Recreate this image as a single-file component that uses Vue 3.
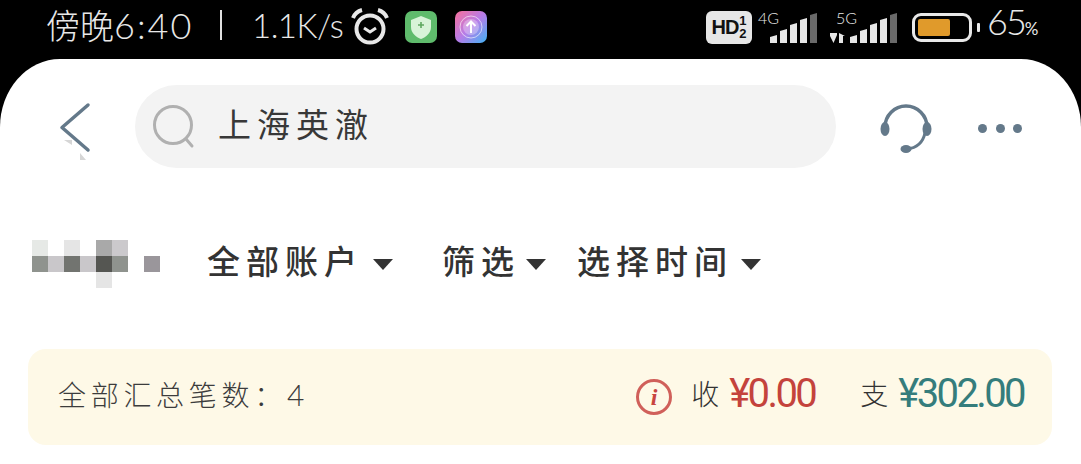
<script setup>
// mosaic cells of the blurred account name, row by row
const mosaic = [
  '#e6e9e6', '', '#e5e5e5', '', '#a9a9a9', '#cbc9cc', '', '',
  '#8f938e', '#c9c7ca', '#727470', '#c9c7ca', '#555652', '#8f938e', '', '#9a969b',
  '', '', '', '', '#e5e5e5', '', '', ''
]
const filters = [
  { label: '筛选', cls: 'f-shai' },
  { label: '选择时间', cls: 'f-time' }
]

// signal bars: slanted top, bottom at y=30
const tops = [22, 16, 10, 5, 0]
function bars(offset) {
  return tops.map((t, i) => {
    const x = offset + i * 10
    return { d: `M${x} 30V${t + 2}L${x + 7} ${t}V30Z`, fill: i === 4 ? '#6a6a6a' : '#e6e6e6' }
  })
}
const bars4g = bars(0)
const bars5g = bars(20)
</script>

<template>
  <div class="page">
    <div class="status">
      <div class="st-left">
        <span class="time"><span class="cjk">傍晚</span>6:40</span>
        <span class="sep"></span>
        <span class="speed">1.1K/s</span>
        <svg class="alarm" width="40" height="40" viewBox="0 0 40 40">
          <circle cx="20" cy="22" r="13.5" fill="none" stroke="#e8e8e8" stroke-width="4" />
          <path d="M14 21l6 4 6-4" fill="none" stroke="#e8e8e8" stroke-width="3" />
          <path d="M3 11C5 6 8 4 12 3M37 11C35 6 32 4 28 3" fill="none" stroke="#e8e8e8" stroke-width="4" />
        </svg>
        <svg class="app-a" width="32" height="32" viewBox="0 0 32 32">
          <rect width="32" height="32" rx="7" fill="#5fbb6c" />
          <path d="M16 5l10 4v7c0 6-5 10-10 12-5-2-10-6-10-12V9z" fill="#d8f3d8" />
          <path d="M16 11v6M13 14h6" stroke="#5fa860" stroke-width="1.6" />
        </svg>
        <svg class="app-b" width="32" height="32" viewBox="0 0 32 32">
          <defs>
            <linearGradient id="upGrad" x1="0" y1="0" x2="1" y2="1">
              <stop offset="0" stop-color="#f7709a" />
              <stop offset="0.5" stop-color="#b77ce8" />
              <stop offset="1" stop-color="#3fb4f5" />
            </linearGradient>
          </defs>
          <rect width="32" height="32" rx="7" fill="url(#upGrad)" />
          <circle cx="16" cy="16" r="11" fill="none" stroke="#fff" stroke-opacity=".6" />
          <circle cx="16" cy="16" r="8" fill="#fff" fill-opacity=".3" />
          <path d="M16 22v-11M11.500 15l4.500-4.500 4.500 4.500" fill="none" stroke="#fff" stroke-width="2" />
        </svg>
      </div>
      <div class="st-right">
        <div class="hd">
          <span class="hd-main">HD</span>
          <span class="hd-frac"><span>1</span><span>2</span></span>
        </div>
        <div class="net net-4g">
          <span class="net-label">4G</span>
          <svg width="47" height="30" viewBox="0 0 47 30">
            <path v-for="b in bars4g" :key="b.d" :d="b.d" :fill="b.fill" stroke-linejoin="round" />
          </svg>
        </div>
        <div class="net net-5g">
          <span class="net-label">5G</span>
          <svg width="67" height="30" viewBox="0 0 67 30">
            <path d="M0 20h7v2l-3.500 8L0 23zM9 20l6 3h-2v7H9z" fill="#e6e6e6" />
            <path v-for="b in bars5g" :key="b.d" :d="b.d" :fill="b.fill" />
          </svg>
        </div>
        <div class="battery">
          <div class="bat-body"><div class="bat-fill"></div></div>
          <div class="bat-tip"></div>
        </div>
        <span class="pct">65<small>%</small></span>
      </div>
    </div>

    <div class="sheet">
      <div class="topbar">
        <svg class="back" width="34" height="62" viewBox="0 0 34 62">
          <path d="M29 5L3 27.500l26 22.500" fill="none" stroke="#64798a" stroke-width="3.500" stroke-linecap="round" stroke-linejoin="round" />
          <path d="M5 40h8v5zM21 53l6 7h-6z" fill="#d6d6d6" />
        </svg>
        <div class="search">
          <svg width="46" height="46" viewBox="0 0 46 46">
            <circle cx="21" cy="21" r="18.500" fill="none" stroke="#b0b0b0" stroke-width="3" />
            <path d="M34 35l6 7" stroke="#b0b0b0" stroke-width="3" stroke-linecap="round" />
          </svg>
          <span class="query">上海英澈</span>
        </div>
        <svg class="headset" width="54" height="54" viewBox="0 0 54 54">
          <path d="M6 24A21 21 0 0 1 48 24" fill="none" stroke="#64798a" stroke-width="3.500" />
          <path d="M46 30C44 39 38 45 28 46" fill="none" stroke="#64798a" stroke-width="3" />
          <ellipse cx="6" cy="26" rx="4.500" ry="7" fill="#64798a" />
          <ellipse cx="48" cy="26" rx="4.500" ry="7" fill="#64798a" />
          <ellipse cx="27" cy="46" rx="5.500" ry="4" fill="#64798a" />
        </svg>
        <div class="more"><i></i><i></i><i></i></div>
      </div>

      <div class="filters">
        <div class="mosaic">
          <span v-for="(c, i) in mosaic" :key="i" :style="{ background: c }"></span>
        </div>
        <div class="filter f-all">全部账户<b class="caret"></b></div>
        <div v-for="f in filters" :key="f.label" class="filter" :class="f.cls">{{ f.label }}<b class="caret"></b></div>
      </div>

      <div class="summary">
        <span class="count">全部汇总笔数：<em>4</em></span>
        <div class="totals">
          <span class="info">i</span>
          <span class="t-label">收</span>
          <span class="amount in">¥0.00</span>
          <span class="t-label t-out">支</span>
          <span class="amount out">¥302.00</span>
        </div>
      </div>
    </div>
  </div>
</template>

<style>
html, body { margin: 0; background: #000; }
</style>

<style scoped>
.page {
  width: 1081px;
  height: 464px;
  overflow: hidden;
  background: #000;
  font-family: "Noto Sans CJK SC", "Noto Sans", sans-serif;
}
.status {
  height: 59px;
  display: flex;
  justify-content: space-between;
  align-items: center;
  color: #e8e8e8;
  padding: 0 44px 5px 46px;
  box-sizing: border-box;
}
.st-left, .st-right { display: flex; align-items: center; }
.time, .speed, .pct { font-family: Lato, sans-serif; font-weight: 300; font-size: 36px; line-height: 40px; margin-bottom: 5px; }
.time { width: 144px; flex: none; white-space: nowrap; letter-spacing: 2px; }
.cjk { font-family: "Noto Sans CJK SC", sans-serif; font-weight: 300; font-size: 34px; letter-spacing: 0; }
.sep { width: 2px; height: 30px; background: #e0e0e0; margin: 0 30px 5px 30px; flex: none; }
.speed { width: 98px; flex: none; font-size: 33px; white-space: nowrap; letter-spacing: -0.500px; }
.app-a { margin-left: 15px; }
.app-b { margin-left: 18px; }
.hd {
  width: 46px;
  height: 33px;
  background: #e6e6e6;
  border-radius: 6px;
  display: flex;
  align-items: center;
  justify-content: center;
  color: #111;
  font-family: "Liberation Sans", sans-serif;
  font-weight: 700;
}
.hd-main { font-size: 20px; letter-spacing: -1px; }
.hd-frac { display: flex; flex-direction: column; font-size: 13px; line-height: 13px; margin-left: 1px; }
.net { position: relative; display: flex; height: 30px; margin-top: 2px; }
.net-4g { margin-left: 18px; }
.net-5g { margin-left: 13px; }
.net-label { position: absolute; top: -3px; font-family: Lato, sans-serif; font-size: 16px; font-weight: 300; line-height: 16px; }
.net-4g .net-label { left: -12px; }
.net-5g .net-label { left: 6px; }
.battery { display: flex; align-items: center; margin-left: 15px; }
.bat-body {
  width: 60px;
  height: 29px;
  box-sizing: border-box;
  border: 3px solid #e8e8e8;
  border-radius: 9px;
  padding: 3px;
}
.bat-fill { width: 32px; height: 100%; background: #e09a2b; border-radius: 2px; }
.bat-tip { width: 3px; height: 9px; background: #e8e8e8; margin-left: 5px; border-radius: 1px; }
.pct { width: 50px; flex: none; margin-left: 7px; white-space: nowrap; letter-spacing: -2px; }
.pct small { font-size: 17px; font-weight: 400; letter-spacing: 0; margin-left: 0; }

.sheet {
  height: 405px;
  background: #fff;
  border-radius: 60px 60px 0 0 / 68px 68px 0 0;
  box-sizing: border-box;
  padding: 26px 29px 0 28px;
}
.topbar { display: flex; align-items: center; height: 83px; }
.back { margin: 8px 0 0 31px; flex: none; }
.search {
  width: 701px;
  height: 83px;
  margin-left: 42px;
  flex: none;
  background: #f3f3f3;
  border-radius: 42px;
  display: flex;
  align-items: center;
  padding-left: 17px;
  box-sizing: border-box;
}
.query { margin: 0 0 8px 20px; font-size: 33px; font-weight: 400; letter-spacing: 6px; color: #383838; }
.headset { margin: 6px 0 0 43px; flex: none; }
.more { display: flex; gap: 8.500px; margin: 3px 0 0 45px; }
.more i { width: 9px; height: 9px; border-radius: 50%; background: #64798a; }

.filters { display: flex; align-items: center; height: 112px; margin-top: 38px; color: #333; }
.mosaic {
  display: grid;
  grid-template-columns: repeat(8, 16px);
  grid-auto-rows: 16px;
  margin: 4px 0 0 4px;
  flex: none;
}
.filter { display: flex; align-items: center; font-size: 33px; font-weight: 500; letter-spacing: 6px; line-height: 40px; margin-bottom: 4px; }
.f-all { margin-left: 47px; }
.f-shai { margin-left: 49px; }
.f-time { margin-left: 31px; }
.caret {
  width: 0;
  height: 0;
  border-left: 10px solid transparent;
  border-right: 10px solid transparent;
  border-top: 11px solid #333;
  margin-left: 10px;
  margin-top: 8px;
}
.f-shai .caret { margin-left: 6px; }
.f-time .caret { margin-left: 8px; }

.summary {
  height: 96px;
  margin-top: 31px;
  background: #fef9e7;
  border-radius: 18px;
  display: flex;
  align-items: center;
  justify-content: space-between;
  padding: 0 28px 0 30px;
}
.count { font-size: 28px; font-weight: 300; letter-spacing: 4.700px; color: #3c3c3c; margin-bottom: 6px; }
.count em { font-style: normal; font-family: Lato, sans-serif; font-weight: 300; font-size: 30px; }
.totals { display: flex; align-items: center; }
.info {
  width: 36px;
  height: 36px;
  box-sizing: border-box;
  border: 3px solid #d0605a;
  border-radius: 50%;
  color: #c8453f;
  display: flex;
  align-items: center;
  justify-content: center;
  font-family: "Liberation Serif", serif;
  font-style: italic;
  font-weight: 700;
  font-size: 24px;
}
.t-label { font-size: 28px; font-weight: 300; color: #333; margin: 0 0 8px 19px; }
.t-out { margin-left: 45px; }
.amount { font-family: Roboto, sans-serif; font-weight: 400; font-size: 40px; letter-spacing: -2.600px; margin: 0 0 7px 10px; line-height: 40px; }
.in { color: #c4433c; }
.out { color: #357d7c; }
</style>
